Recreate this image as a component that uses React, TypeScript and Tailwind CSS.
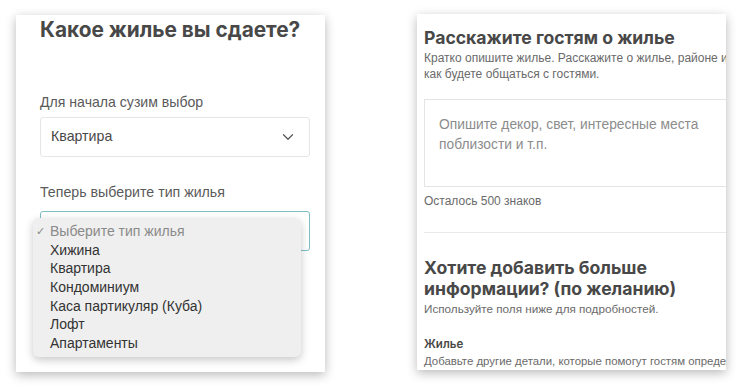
import { ChevronDown } from "lucide-react";

const options = ["Хижина", "Квартира", "Кондоминиум", "Каса партикуляр (Куба)", "Лофт", "Апартаменты"];

function PropertyTypeCard() {
  return (
    <div className="relative h-[357px] w-[309px] shrink-0 overflow-hidden bg-white pl-6 pr-[15px] shadow-[0_3px_10px_rgba(0,0,0,0.28)]">
      <h1 className="mt-[1px] font-['Inter',sans-serif] text-[20.8px] font-bold leading-[28px] text-[#484848]">
        Какое жилье вы сдаете?
      </h1>

      <p className="mt-[49px] text-[14.1px] leading-[18px] text-[#5a5a5a]">Для начала сузим выбор</p>
      <div className="mt-[6px] flex h-[40px] items-center justify-between rounded-[3px] border border-[#e6e6e6] pl-[10px] pr-[12px]">
        <span className="text-[14.2px] text-[#484848]">Квартира</span>
        <ChevronDown className="h-[18px] w-[18px] text-[#555]" strokeWidth={1.6} />
      </div>

      <p className="mt-[26px] text-[14.2px] leading-[18px] text-[#5a5a5a]">Теперь выберите тип жилья</p>
      <div className="mt-[10px] h-[40px] rounded-[3px] border border-[#7dbfc4]" />

      <div className="absolute left-[17px] top-[203px] w-[268px] rounded-[6px] bg-[#efefef] py-[4px] shadow-[0_3px_8px_rgba(0,0,0,0.22)]">
        <div className="flex h-[19px] items-center text-[14px] text-[#8a8a8a]">
          <span className="w-[17px] pl-[3px] text-[11px]">✓</span>
          <span>Выберите тип жилья</span>
        </div>
        {options.map((o) => (
          <div key={o} className="flex h-[18.6px] items-center pl-[17px] text-[14px] text-[#333]">
            {o}
          </div>
        ))}
      </div>
    </div>
  );
}

function DescriptionCard() {
  return (
    <div className="h-[356px] w-[309px] shrink-0 overflow-hidden bg-white pl-[7px] shadow-[0_3px_10px_rgba(0,0,0,0.28)]">
      <div className="w-[340px]">
        <h2 className="mt-[12px] font-['Inter',sans-serif] text-[17.6px] font-bold leading-[24px] text-[#484848]">
          Расскажите гостям о жилье
        </h2>
        <p className="whitespace-nowrap text-[12px] leading-[16px] text-[#6a6a6a]">
          Кратко опишите жилье. Расскажите о жилье, районе и соседях,
          <br />
          как будете общаться с гостями.
        </p>

        <div className="mt-[17px] h-[88px] border border-[#e4e4e4] px-[14px] pt-[15px]">
          <p className="text-[13.8px] leading-[20px] text-[#8c8c8c]">
            Опишите декор, свет, интересные места
            <br />
            поблизости и т.п.
          </p>
        </div>
        <p className="mt-[6px] text-[12px] leading-[16px] text-[#6a6a6a]">Осталось 500 знаков</p>

        <div className="mt-[23px] h-px bg-[#e8e8e8]" />

        <h2 className="mt-[24px] font-['Inter',sans-serif] text-[17.6px] font-bold leading-[21px] text-[#484848]">
          Хотите добавить больше
          <br />
          информации? (по желанию)
        </h2>
        <p className="mt-[2px] text-[11.7px] leading-[16px] text-[#6a6a6a]">Используйте поля ниже для подробностей.</p>

        <p className="mt-[19px] font-['Inter',sans-serif] text-[11.5px] font-semibold leading-[17px] text-[#484848]">Жилье</p>
        <p className="whitespace-nowrap text-[11.4px] leading-[16px] text-[#6a6a6a]">
          Добавьте другие детали, которые помогут гостям определиться
          <br />
          с выбором жилья.
        </p>
      </div>
    </div>
  );
}

export default function App() {
  return (
    <div className="h-[391px] w-[750px] bg-white font-['Liberation_Sans','Noto_Sans',sans-serif]">
      <div className="flex items-start gap-[92px] pl-[16px] pt-[14px]">
        <div className="pt-[1px]">
          <PropertyTypeCard />
        </div>
        <DescriptionCard />
      </div>
    </div>
  );
}
